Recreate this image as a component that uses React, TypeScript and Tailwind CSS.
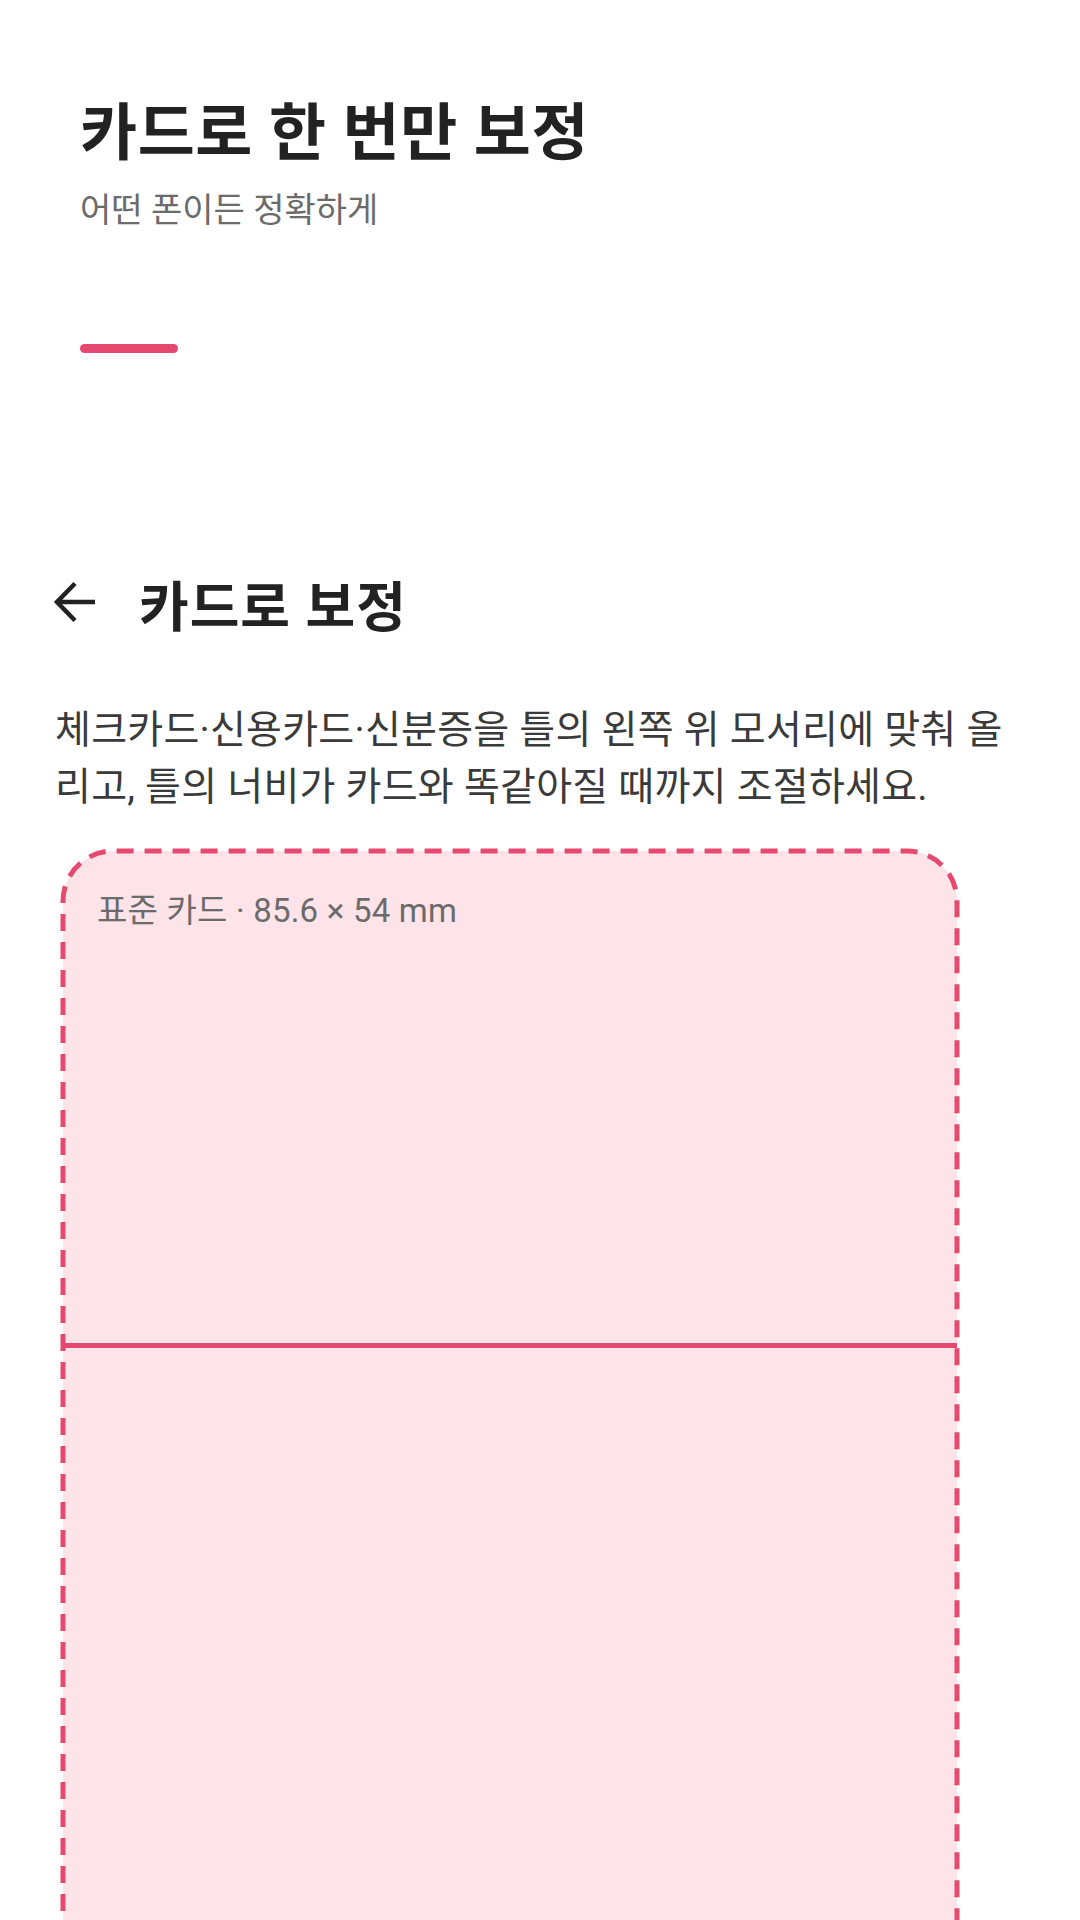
import React from "react";

const FONT = "font-['Roboto','Noto_Sans_CJK_KR',sans-serif]";

function BackArrow() {
  return (
    <svg width="44" height="44" viewBox="0 0 44 44" className="shrink-0 mt-[1px]" aria-hidden>
      <path d="M4 22 H42" stroke="#222222" strokeWidth="4.5" fill="none" />
      <path d="M22 3.5 L4 22 L22 40.5" stroke="#222222" strokeWidth="4.5" fill="none" strokeLinejoin="miter" />
    </svg>
  );
}

function CardFrame() {
  const w = 894;
  const h = 1200;
  const r = 50;
  const d = `M0 ${h} L0 ${r} A${r} ${r} 0 0 1 ${r} 0 L${w - r} 0 A${r} ${r} 0 0 1 ${w} ${r} L${w} ${h}`;
  return (
    <svg
      className="absolute left-0 top-0 overflow-visible pointer-events-none"
      width={w}
      height={h}
      viewBox={`0 0 ${w} ${h}`}
      aria-hidden
    >
      <path d={d} fill="none" stroke="#e5496f" strokeWidth="5" strokeDasharray="17 11" />
    </svg>
  );
}

export default function App() {
  return (
    <div className={`relative w-[1080px] h-[1920px] overflow-hidden bg-white ${FONT}`}>
      <div className="pl-[80px] pt-[99px]">
        <h1 className="text-[62px] leading-[70px] tracking-[0.6px] font-bold text-[#222222]">카드로 한 번만 보정</h1>
        <p className="mt-[21px] text-[34px] leading-[40px] text-[#6b6b6b]">어떤 폰이든 정확하게</p>
        <div className="mt-[114px] h-[9px] w-[98px] rounded-full bg-[#e5496f]" />
      </div>

      <div className="pl-[53px] pr-[20px] mt-[226px]">
        <div className="flex items-start h-[60px]">
          <BackArrow />
          <h2 className="ml-[42px] text-[54px] leading-[60px] tracking-[1px] font-bold text-[#222222]">카드로 보정</h2>
        </div>

        <p className="mt-[63px] ml-[2px] text-[39px] leading-[57px] tracking-[0.25px] whitespace-nowrap text-[#3a3a3a]">
          체크카드·신용카드·신분증을 틀의 왼쪽 위 모서리에 맞춰 올
          <br />
          리고, 틀의 너비가 카드와 똑같아질 때까지 조절하세요.
        </p>

        <div className="relative mt-[35px] ml-[10px] w-[894px] h-[1200px] rounded-t-[50px] bg-[#fee4e9]">
          <CardFrame />
          <div className="pl-[34px] pt-[40px] text-[33px] leading-[40px] tracking-[0.2px] text-[#6b6b6b]">
            표준 카드 · 85.6 × 54 mm
          </div>
          <div className="absolute left-0 right-0 top-[492px] h-[5px] bg-[#e5496f]" />
        </div>
      </div>
    </div>
  );
}
